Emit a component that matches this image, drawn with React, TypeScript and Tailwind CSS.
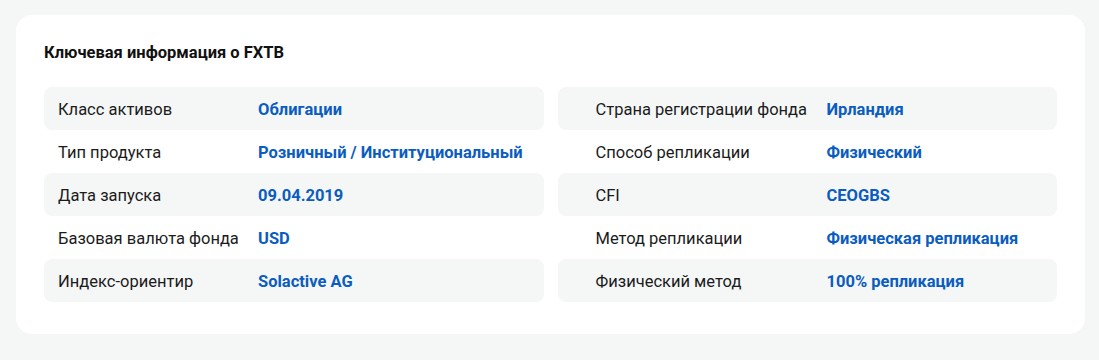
import React from 'react';

interface InfoRow {
  label: string;
  value: string;
}

const leftRows: InfoRow[] = [
  { label: 'Класс активов', value: 'Облигации' },
  { label: 'Тип продукта', value: 'Розничный / Институциональный' },
  { label: 'Дата запуска', value: '09.04.2019' },
  { label: 'Базовая валюта фонда', value: 'USD' },
  { label: 'Индекс-ориентир', value: 'Solactive AG' },
];

const rightRows: InfoRow[] = [
  { label: 'Страна регистрации фонда', value: 'Ирландия' },
  { label: 'Способ репликации', value: 'Физический' },
  { label: 'CFI', value: 'CEOGBS' },
  { label: 'Метод репликации', value: 'Физическая репликация' },
  { label: 'Физический метод', value: '100% репликация' },
];

function InfoColumn({ rows, side }: { rows: InfoRow[]; side: 'left' | 'right' }) {
  return (
    <div className="flex flex-col">
      {rows.map((row, i) => (
        <div
          key={row.label}
          className={[
            'flex items-center h-[43px] pt-[4px] rounded-lg',
            i % 2 === 0 ? 'bg-[#f5f7f7]' : '',
            side === 'left' ? 'pl-[14px]' : 'pl-[38px]',
          ].join(' ')}
        >
          <span className={`${side === 'left' ? 'w-[200px]' : 'w-[231px]'} shrink-0 text-[#1b1b1b]`}>
            {row.label}
          </span>
          <span className="font-bold text-[#0b5cbf]">{row.value}</span>
        </div>
      ))}
    </div>
  );
}

export default function App() {
  return (
    <div className="min-h-[360px] bg-[#f5f7f7] pl-4 pr-[14px] pt-[15px] font-['Roboto',sans-serif] text-[16.5px]">
      <div className="bg-white rounded-[16px] px-[28px] pt-[27px] pb-[32px]">
        <h2 className="text-[16.5px] leading-[22px] font-bold text-[#111] mb-[23px]">
          Ключевая информация о FXTB
        </h2>
        <div className="grid grid-cols-2 gap-[14px]">
          <InfoColumn rows={leftRows} side="left" />
          <InfoColumn rows={rightRows} side="right" />
        </div>
      </div>
    </div>
  );
}
